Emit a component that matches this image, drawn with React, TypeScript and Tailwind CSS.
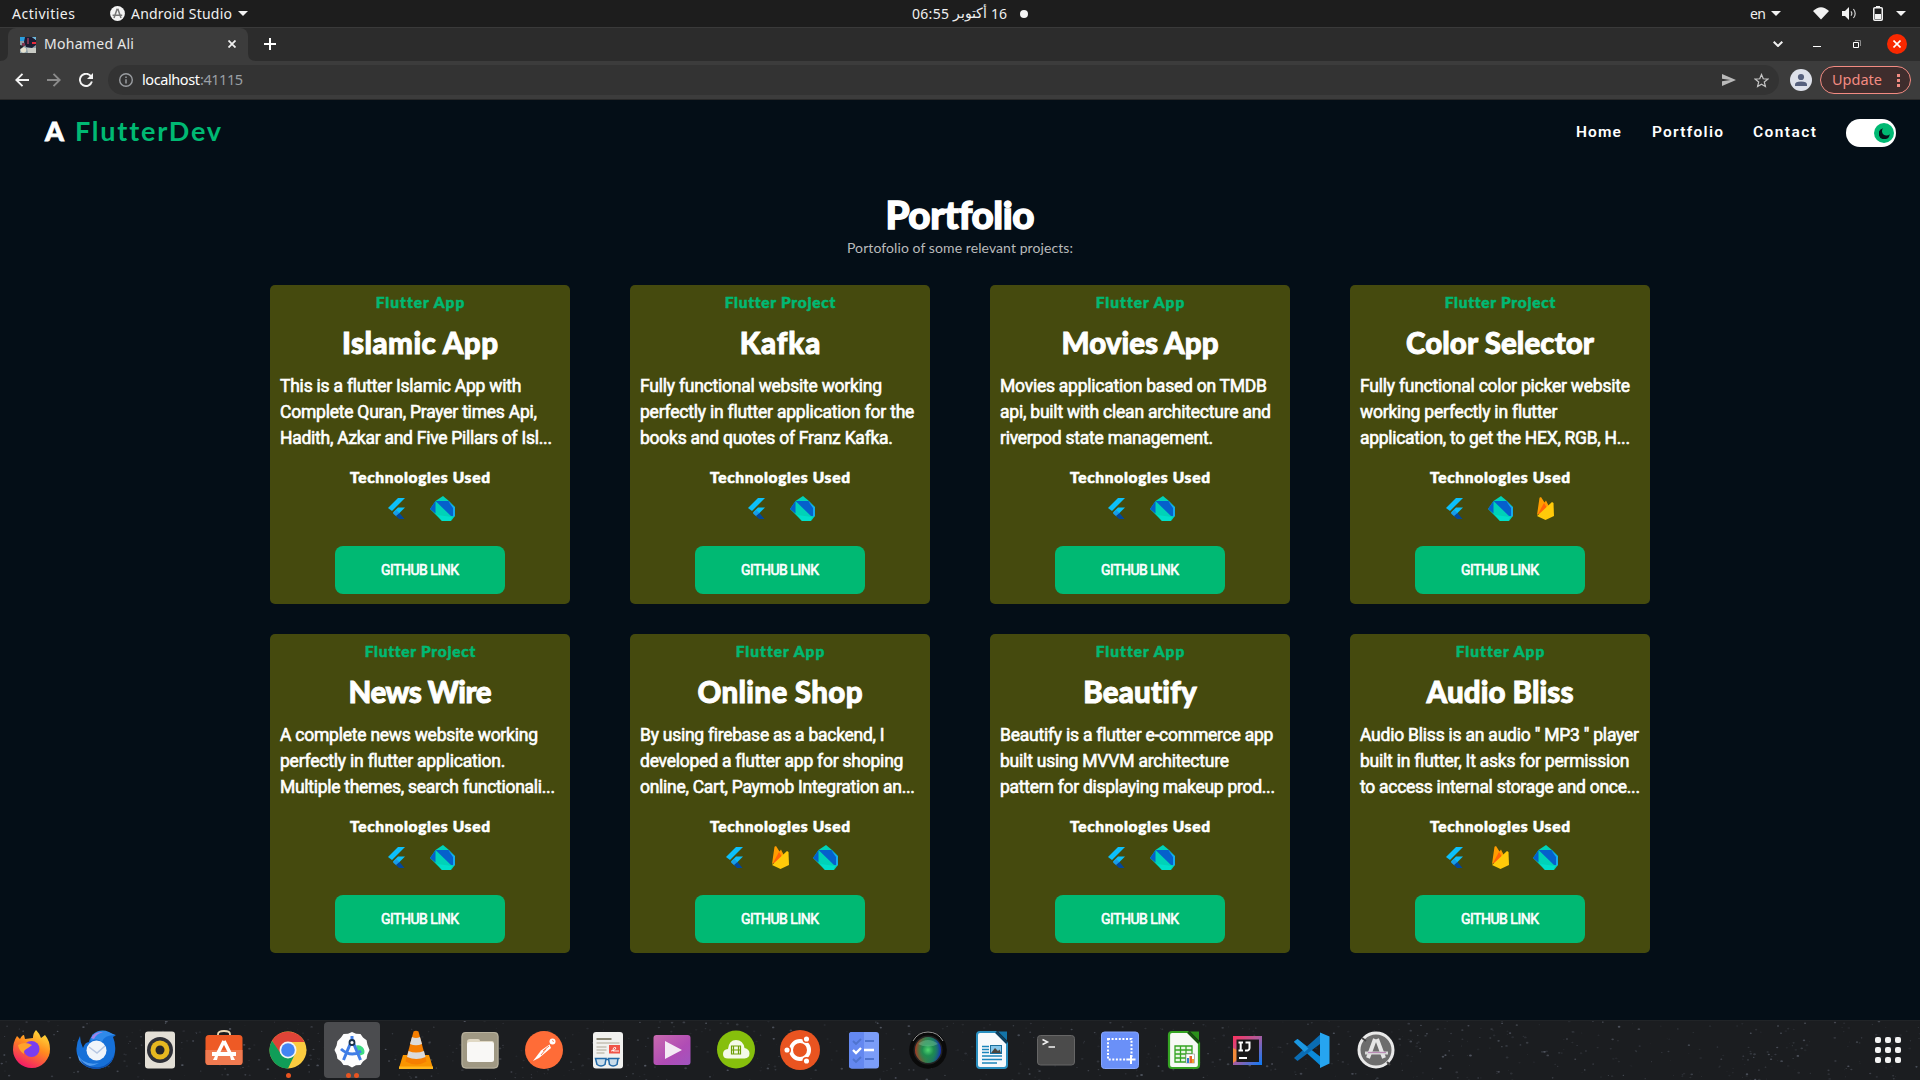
import React, { useLayoutEffect, useRef } from "react";

/* Single line of text whose tracking is adjusted so that it spans `w` pixels. */
function Fit({ w, className = "", children }: { w: number; className?: string; children: string }) {
  const ref = useRef<HTMLSpanElement>(null);
  useLayoutEffect(() => {
    const el = ref.current;
    if (!el) return;
    const s = (w - el.getBoundingClientRect().width) / Math.max(1, children.length - 1);
    el.style.letterSpacing = `${s}px`;
    el.style.marginRight = `${-s}px`;
    return () => {
      el.style.letterSpacing = "";
      el.style.marginRight = "";
    };
  }, [w, children]);
  return (
    <span ref={ref} className={`inline-block shrink-0 whitespace-nowrap ${className}`}>
      {children}
    </span>
  );
}

const UI = "font-['Noto_Sans',sans-serif]";
const GEO = "font-['Lato',sans-serif]";

function Caret({ className = "" }: { className?: string }) {
  return (
    <svg className={`h-[5px] w-[10px] shrink-0 ${className}`} viewBox="0 0 10 5">
      <path d="M0 0h10L5 5z" fill="#f2f2f2" />
    </svg>
  );
}

function TopBar() {
  return (
    <div className={`flex h-[27px] items-center bg-[#1d1d1d] text-[14px] text-[#f0f0f0] ${UI}`}>
      <div className="flex w-[912px] items-center">
        <Fit w={63} className="ml-3">Activities</Fit>
        <svg className="ml-[35px] h-[15px] w-[15px]" viewBox="0 0 15 15">
          <circle cx="7.5" cy="7.5" r="7.4" fill="#f4f4f4" />
          <path d="M7.2 2.8 4 12M7.8 2.8 11 12M2.6 9.2h9.6" stroke="#777" strokeWidth="1.5" fill="none" />
        </svg>
        <Fit w={101} className="ml-[6px]">Android Studio</Fit>
        <Caret className="ml-[6px]" />
      </div>
      <div className="flex items-center">
        <Fit w={37}>06:55</Fit>
        <span dir="rtl" className="ml-[6px] w-[32px] whitespace-nowrap text-[13.5px]">أكتوبر</span>
        <Fit w={16} className="ml-[4px]">16</Fit>
        <span className="ml-[13px] h-2 w-2 rounded-full bg-[#f4f4f4]" />
      </div>
      <div className="flex flex-1 items-center justify-end">
        <Fit w={16}>en</Fit>
        <Caret className="ml-[5px]" />
        <svg className="ml-[32px] h-[13px] w-4" viewBox="0 0 16 13">
          <path d="M0 4Q8-3.6 16 4L8 12.6z" fill="#f2f2f2" />
        </svg>
        <svg className="ml-[13px] h-[13px] w-[15px]" viewBox="0 0 15 13">
          <path d="M0 4h3l4-4v13l-4-4H0z" fill="#f2f2f2" />
          <path d="M9 4.3q1.6 2.2 0 4.4M11.4 2q3.6 4.5 0 9" stroke="#cfcfcf" strokeWidth="1.2" fill="none" />
        </svg>
        <svg className="ml-[16px] h-[15px] w-[10px]" viewBox="0 0 10 15">
          <path d="M3 0h4v2H3z" fill="#f2f2f2" />
          <rect x=".75" y="1.75" width="8.5" height="12.5" rx="1" fill="none" stroke="#f2f2f2" strokeWidth="1.5" />
          <path d="M2 8h6v5H2z" fill="#f2f2f2" />
        </svg>
        <Caret className="mr-[14px] ml-[13px]" />
      </div>
    </div>
  );
}

function TabStrip() {
  return (
    <div className={`flex h-[34px] items-center border-t border-[#3a3a3a] bg-[#2c2c2c] ${UI}`}>
      <svg className="h-2 w-2 self-end" viewBox="0 0 8 8">
        <path d="M8 0v8H0q8 0 8-8" fill="#3c3c3c" />
      </svg>
      <div className="flex h-full w-[240px] items-center rounded-t-[8px] bg-[#3c3c3c] text-[14px] text-[#e8e8e8]">
        <svg className="ml-3 h-4 w-4" viewBox="0 0 16 16">
          <path d="M0 0h16v16H0z" fill="#8fa0a8" />
          <path d="M0 0h5v4H0z" fill="#2a9fe0" />
          <path d="M5 0h7l4 3v5l-4 3-6-1-2-5z" fill="#1b1d33" />
          <path d="M7 1h2v6H7zM2 6h3v3H2z" fill="#7e3550" />
          <path d="M12 5h4v2h-4z" fill="#e62b3b" />
          <path d="M12 0h4v3z" fill="#6cb8dd" />
          <circle cx="3.5" cy="13" r="2.8" fill="#e7e3d0" />
          <path d="M7 11h9v5H8z" fill="#c9cbc5" />
          <path d="M0 8l4 1-2 2-2 1z" fill="#23262c" />
        </svg>
        <Fit w={90} className="mb-[2px] ml-[8px]">Mohamed Ali</Fit>
        <svg className="mr-[12px] mb-px ml-auto h-2 w-2" viewBox="0 0 8 8">
          <path d="M.5.5l7 7M7.5.5l-7 7" stroke="#f0f0f0" strokeWidth="1.800" />
        </svg>
      </div>
      <svg className="h-2 w-2 self-end" viewBox="0 0 8 8">
        <path d="M0 0v8h8q-8 0-8-8" fill="#3c3c3c" />
      </svg>
      <svg className="mb-px ml-2 h-3 w-3" viewBox="0 0 12 12">
        <path d="M6 0v12M0 6h12" stroke="#fff" strokeWidth="2" />
      </svg>
      <svg className="mb-px ml-auto h-[6px] w-[10px]" viewBox="0 0 10 6">
        <path d="M.7.7 5 5 9.3.7" stroke="#f0f0f0" strokeWidth="2" fill="none" />
      </svg>
      <span className="mt-[3px] ml-[30px] h-px w-2 bg-white" />
      <svg className="mb-px ml-[32px] h-2 w-2" viewBox="0 0 8 8">
        <path d="M2 .5h5.500V6" stroke="#8a8a8a" fill="none" />
        <path d="M.5 2.500h5v5h-5z" stroke="#fff" fill="none" />
      </svg>
      <span className="mr-[13px] mb-px ml-[26px] flex h-5 w-5 items-center justify-center rounded-full bg-[#f92800]">
        <svg className="h-2 w-2" viewBox="0 0 8 8">
          <path d="M.5.5l7 7M7.5.5l-7 7" stroke="#fff" strokeWidth="1.600" />
        </svg>
      </span>
    </div>
  );
}

function Toolbar() {
  return (
    <div className={`flex h-[39px] items-center border-b border-[#2a2a2a] bg-[#3c3c3c] ${UI}`}>
      <svg className="ml-[15px] h-[14px] w-[14px]" viewBox="0 0 14 14">
        <path d="M14 7H1.5M7.5.8 1.300 7l6.200 6.200" stroke="#f4f4f4" strokeWidth="1.900" fill="none" />
      </svg>
      <svg className="ml-[18px] h-[14px] w-[14px]" viewBox="0 0 14 14">
        <path d="M0 7h12.500M6.500.8 12.700 7l-6.200 6.200" stroke="#8b8b8b" strokeWidth="1.900" fill="none" />
      </svg>
      <svg className="ml-[18px] h-[14px] w-[14px]" viewBox="0 0 14 14">
        <path d="M12.300 3.800A6.100 6.100 0 1 0 12.900 8.500" stroke="#f4f4f4" strokeWidth="1.900" fill="none" />
        <path d="M14 0v6H8z" fill="#f4f4f4" />
      </svg>
      <div className="ml-[15px] flex h-[30px] w-[1671px] items-center rounded-full bg-[#333333] text-[14.5px]">
        <svg className="ml-[11px] h-[14px] w-[14px]" viewBox="0 0 14 14">
          <circle cx="7" cy="7" r="6.300" stroke="#9a9da1" strokeWidth="1.400" fill="none" />
          <path d="M6.250 6.200h1.500v4.300h-1.500zM6.250 3.500h1.500V5h-1.500z" fill="#9a9da1" />
        </svg>
        <Fit w={58} className="ml-[9px] text-white">localhost</Fit>
        <Fit w={43} className="text-[#9aa0a6]">:41115</Fit>
        <svg className="ml-auto h-3 w-[14px]" viewBox="0 0 14 12">
          <path d="M0 0l14 6-14 6V7.300L8.500 6 0 4.700z" fill="#b9b9b9" />
        </svg>
        <svg className="mr-[10px] ml-[18px] h-[15px] w-[15px]" viewBox="0 0 24 24">
          <path d="M12 2.500l2.800 6.700 7.200.6-5.500 4.700 1.700 7L12 17.800 5.800 21.500l1.700-7L2 9.800l7.200-.6z" stroke="#c4c4c4" strokeWidth="2" fill="none" />
        </svg>
      </div>
      <svg className="ml-[11px] h-[22px] w-[22px]" viewBox="0 0 22 22">
        <circle cx="11" cy="11" r="11" fill="#dee1ea" />
        <circle cx="11" cy="8" r="3.100" fill="#56607d" />
        <path d="M5 17v-1.500q0-3 6-3t6 3V17z" fill="#56607d" />
      </svg>
      <div className="ml-2 flex h-7 w-[91px] items-center rounded-full border border-[#f28b82] bg-[#3f2d2d] text-[14.5px] text-[#f28b82]">
        <Fit w={50} className="ml-[11px]">Update</Fit>
        <svg className="ml-[15px] h-[13px] w-[3px]" viewBox="0 0 3 13">
          <path d="M0 0h3v3H0zM0 5h3v3H0zM0 10h3v3H0z" fill="#f28b82" />
        </svg>
      </div>
    </div>
  );
}

function Header() {
  return (
    <header className="flex h-[66px] items-center">
      <Fit w={18} className={`mb-[4px] ml-[45px] text-[27px] font-black text-white [-webkit-text-stroke:0.8px_white] ${GEO}`}>A</Fit>
      <Fit w={145} className={`mb-[4px] ml-[11px] text-[27px] font-bold text-[#00b973] ${GEO}`}>FlutterDev</Fit>
      <nav className="ml-auto flex items-center font-['Roboto',sans-serif] text-[15.5px] font-semibold text-white">
        <Fit w={45}>Home</Fit>
        <Fit w={71} className="ml-[31px]">Portfolio</Fit>
        <Fit w={63} className="ml-[30px]">Contact</Fit>
      </nav>
      <div className="mr-6 ml-[30px] flex h-7 w-[50px] items-center justify-end rounded-full bg-white pr-[2px]">
        <span className="flex h-5 w-5 items-center justify-center rounded-full bg-[#00b973]">
          <svg className="h-[11px] w-[11px]" viewBox="0 0 12 12">
            <path d="M4.500.3a4.800 4.800 0 0 0 7.200 6.400A6 6 0 1 1 4.500.3z" fill="#06111a" />
          </svg>
        </span>
      </div>
    </header>
  );
}

function FlutterIcon() {
  return (
    <svg className="-ml-[2px] h-[21px] w-[17px]" viewBox="0 0 17 21">
      <path d="M10 0h7L4 13 0 10z" fill="#0cc0fb" />
      <path d="M10 9.500h7L11 15.500 8.500 18 5 14.500z" fill="#0cc0fb" />
      <path d="M5 15.500l3.500-3.300 3.300 3.300L8.500 18.500z" fill="#1a9be8" />
      <path d="M8 18l3.500-3 5 6H11z" fill="#02479c" />
    </svg>
  );
}

function DartIcon() {
  return (
    <svg className="h-[25px] w-[25px]" viewBox="0 0 25 25">
      <path d="M0 13 5.500 5 13 0l6 5 6 6v9l-4 5H12l-7-7z" fill="#00d2b8" />
      <path d="M0 13 5.500 5v12.500z" fill="#0560cc" />
      <path d="M5.500 5H19l5 7v8h-3z" fill="#0560cc" />
      <path d="M18 5l6.800 6.500V20L23 21V12z" fill="#1aa4f4" />
      <path d="M7 19l15 2-1.500 4H12z" fill="#00dfca" />
    </svg>
  );
}

function FirebaseIcon() {
  return (
    <svg className="h-[23px] w-[17px]" viewBox="0 0 17 23">
      <path d="M0 18 2.500.8 4 0l3.500 5.500L9 3.500l3 6z" fill="#ff9c00" />
      <path d="M1 17 7 6l3 5-6 6z" fill="#ff6408" />
      <path d="M0 19 15 5l1.500 1L17 19l-8.500 4z" fill="#ffca0a" />
    </svg>
  );
}

type Tech = "f" | "d" | "b";
type Project = { tag: string; title: string; tw: number; lines: [string, number][]; tech: Tech[] };

const projects: Project[] = [
  { tag: "Flutter App", title: "Islamic App", tw: 156, lines: [["This is a flutter Islamic App with", 241], ["Complete Quran, Prayer times Api,", 257], ["Hadith, Azkar and Five Pillars of Isl...", 272]], tech: ["f", "d"] },
  { tag: "Flutter Project", title: "Kafka", tw: 81, lines: [["Fully functional website working", 242], ["perfectly in flutter application for the", 274], ["books and quotes of Franz Kafka.", 253]], tech: ["f", "d"] },
  { tag: "Flutter App", title: "Movies App", tw: 157, lines: [["Movies application based on TMDB", 267], ["api, built with clean architecture and", 271], ["riverpod state management.", 213]], tech: ["f", "d"] },
  { tag: "Flutter Project", title: "Color Selector", tw: 188, lines: [["Fully functional color picker website", 270], ["working perfectly in flutter", 197], ["application, to get the HEX, RGB, H...", 270]], tech: ["f", "d", "b"] },
  { tag: "Flutter Project", title: "News Wire", tw: 143, lines: [["A complete news website working", 258], ["perfectly in flutter application.", 225], ["Multiple themes, search functionali...", 275]], tech: ["f", "d"] },
  { tag: "Flutter App", title: "Online Shop", tw: 165, lines: [["By using firebase as a backend, I", 244], ["developed a flutter app for shoping", 263], ["online, Cart, Paymob Integration an...", 275]], tech: ["f", "b", "d"] },
  { tag: "Flutter App", title: "Beautify", tw: 114, lines: [["Beautify is a flutter e-commerce app", 273], ["built using MVVM architecture", 229], ["pattern for displaying makeup prod...", 275]], tech: ["f", "d"] },
  { tag: "Flutter App", title: "Audio Bliss", tw: 147, lines: [["Audio Bliss is an audio \" MP3 \" player", 279], ["built in flutter, It asks for permission", 269], ["to access internal storage and once...", 280]], tech: ["f", "b", "d"] },
];

function Card({ p }: { p: Project }) {
  return (
    <article className="flex h-[319px] w-[300px] flex-col items-center rounded-[5px] bg-[#454a0e] text-white">
      <div className="mt-[7px] flex h-5 items-center">
        <Fit w={p.tag === "Flutter App" ? 88 : 110} className={`text-[15.5px] leading-5 font-black text-[#00b973] [-webkit-text-stroke:0.5px_#00b973] ${GEO}`}>{p.tag}</Fit>
      </div>
      <div className="mt-[11px] flex h-10 items-center">
        <Fit w={p.tw} className={`text-[29.5px] leading-10 font-black [-webkit-text-stroke:0.9px_white] ${GEO}`}>{p.title}</Fit>
      </div>
      <div className="mt-[10px] flex w-full flex-col items-start pl-[10px] font-['Roboto',sans-serif] text-[17.5px] leading-[26px] font-normal [-webkit-text-stroke:0.6px_white]">
        {p.lines.map(([t, w]) => (
          <Fit key={t} w={w}>{t}</Fit>
        ))}
      </div>
      <div className="mt-[16px] flex h-5 items-center">
        <Fit w={140} className={`text-[15.5px] leading-5 font-black [-webkit-text-stroke:0.6px_white] ${GEO}`}>Technologies Used</Fit>
      </div>
      <div className="mt-[9px] flex h-[25px] items-center">
        {p.tech.map((t) => (
          <span key={t} className="flex w-[45px] items-center justify-center">
            {t === "f" ? <FlutterIcon /> : t === "d" ? <DartIcon /> : <FirebaseIcon />}
          </span>
        ))}
      </div>
      <button className="mt-[25px] flex h-12 w-[170px] items-center justify-center rounded-[8px] bg-[#00b973] font-['Roboto',sans-serif] text-[14px] font-normal [-webkit-text-stroke:0.6px_white]">
        <Fit w={78}>GITHUB LINK</Fit>
      </button>
    </article>
  );
}

function Firefox() {
  return (
    <>
      <defs>
        <linearGradient id="ff" x1=".8" y1="0" x2=".3" y2="1"><stop offset="0" stopColor="#ffe43d" /><stop offset=".45" stopColor="#ff8a1e" /><stop offset="1" stopColor="#f2156b" /></linearGradient>
      </defs>
      <path d="M24 0q4 4 5 8l4-3q5 6 5 14a18 18 0 0 1-37 1q0-8 4-14l3 3q2-4 4-4l1 4 8-1q0-5 3-8z" fill="url(#ff)" />
      <circle cx="19.5" cy="19" r="8" fill="#7a3df0" />
      <path d="M6 15q7-4 14 0l-4 3q-5 2-4 6-5-3-6-9z" fill="#ffa22b" />
    </>
  );
}

function Thunderbird() {
  return (
    <>
      <path d="M4 6Q-1 15 1 24q4 14 19 15 17-1 19-17 1-8-2-15l3-2-4-1Q26-1 18 4q-4 3-5 8-4 0-6 6-3-6-3-12z" fill="#1670d8" />
      <path d="M16 5q8-7 17-3l6 3q-11 0-13 7-5-5-11-1z" fill="#2f8aea" />
      <path d="M15 8q4-7 12-6-7 2-9 7z" fill="#a184e8" />
      <circle cx="20.500" cy="20.500" r="10" fill="#f0f4fa" />
      <path d="M13 17l8 6 8-7" stroke="#b7c7e2" strokeWidth="1.500" fill="none" />
      <path d="M2 25q6 11 21 8-12 7-20-3z" fill="#4f9bf0" />
      <path d="M4 29q8 10 20 8 10-2 14-12-3 13-18 14Q8 38 4 29z" fill="#0e4fae" />
    </>
  );
}

const dock: React.ReactNode[] = [
  <Firefox />,
  <Thunderbird />,
  <>
    <rect x="5" y="1.500" width="30" height="37" rx="3" fill="#e3dfd6" />
    <circle cx="20" cy="20" r="13" fill="#2e3038" /><circle cx="20" cy="20" r="9.500" fill="#e6b820" /><circle cx="20" cy="20" r="4.500" fill="#26262a" />
  </>,
  <>
    <path d="M14 7V4q0-3 6-3t6 3v3" stroke="#ecd9b5" strokeWidth="1.800" fill="none" />
    <rect x="1.500" y="5" width="37" height="30" rx="3.500" fill="#ee5a25" /><path d="M1.500 20h37v12q0 3-3 3h-31q-3 0-3-3z" fill="#f07a50" />
    <path d="M20 11l-6 12M20 11l6 12" stroke="#fff" strokeWidth="3.500" fill="none" /><path d="M8 22h24v4H8zM11 26h3l-1 4h-4zM26 26h3l2 4h-4z" fill="#fff" />
  </>,
  <>
    <circle cx="20" cy="20" r="18.500" fill="#fbcb3f" />
    <path d="M4 10.700A18.500 18.500 0 0 1 36.500 12H20L12 24z" fill="#df4437" />
    <path d="M4 10.700A18.500 18.500 0 0 0 20 38.500l7-14.500-14 0z" fill="#109d58" />
    <circle cx="20" cy="20" r="8.500" fill="#f4f4f4" /><circle cx="20" cy="20" r="6.800" fill="#4384f3" />
  </>,
  <>
    <path d="M20 2l4 1.700 4.500.3 2.500 3.500 3.600 2.700.8 4.300L37.500 20l-2.100 4.500-.8 4.300-3.600 2.700L28.500 35l-4.500.3-4 2.200-4-2.200-4.500-.3L9 31.500l-3.600-2.700-.8-4.300L2.500 20l2.100-4.500.8-4.300L9 7.500 11.500 4l4.500-.3z" fill="#fdfdfd" />
    <path d="M24 15.500a6.500 6.500 0 0 1 8 8.500l-5 2z" fill="#3ddc84" />
    <path d="M19 12l-7.500 18M21 12l7.500 18M9 19q10 9 20 2" stroke="#3f7de6" strokeWidth="3" fill="none" />
    <path d="M20 6v5" stroke="#3f7de6" strokeWidth="3" /><circle cx="20" cy="12.500" r="2.500" fill="#fff" stroke="#173049" strokeWidth="1.800" />
  </>,
  <>
    <path d="M7 25h26l4 13H3z" fill="#f99400" /><path d="M3 36.500h34V39H3z" fill="#ffb61c" />
    <path d="M17.500 1.500q2.500-1.500 5 0l8 30q-10 6-21 0z" fill="#f57e00" />
    <path d="M16 7q4 2 8 0l2 7q-6 2.500-12 0zM12.500 21q7.500 3 15.500 0l1.500 6q-9 4-18.500 0z" fill="#dbdbdb" />
  </>,
  <>
    <rect x="1.500" y="2" width="37" height="36.500" rx="4" fill="#9f9883" /><rect x="2" y="2.500" width="36" height="35.500" rx="4" fill="none" stroke="#b7b19e" />
    <path d="M7 12q0-3 3-3h8q2 0 2 2h12q2 0 2 3v14q0 3-3 3H10q-3 0-3-3z" fill="#e0d8c4" /><rect x="7" y="12" width="27" height="20" rx="2.500" fill="#f9f8f6" />
  </>,
  <>
    <circle cx="20" cy="20" r="19" fill="#ff6c37" /><circle cx="28.500" cy="11.500" r="3" fill="#fff" />
    <path d="M25.500 14.500l-8.500 6-8 10.500 6-3 12-10z" fill="#fff" /><path d="M25 16l-6 5M22 19l-5 6" stroke="#ff6c37" strokeWidth=".9" /><path d="M28 10.500l2 1" stroke="#ff6c37" strokeWidth=".8" />
  </>,
  <>
    <rect x="5" y="2" width="30" height="36.500" rx="3" fill="#f1f1ef" />
    <path d="M8.500 9h15" stroke="#8c8977" strokeWidth="2" /><path d="M8.500 13h23M8.500 17h10M8.500 20h10M8.500 23h8" stroke="#c4c0b4" strokeWidth="1.600" />
    <rect x="21" y="15" width="11" height="8.500" fill="#f05448" /><path d="M23 21q4 0 5-3-3-2-3 3h6" stroke="#fff" fill="none" strokeWidth=".9" />
    <path d="M7.500 28.500h10.500l-1 6q-4 3-8 0zM20.500 28.500h9.500l-1 6q-4 3-7.500 0zM30 29l1.500-1" fill="#c9dcea" stroke="#236aa8" strokeWidth="1.500" /><path d="M18 29.500h3" stroke="#236aa8" strokeWidth="1.500" />
  </>,
  <>
    <defs><linearGradient id="vid" x1="0" y1="0" x2="1" y2="1"><stop offset="0" stopColor="#c96aaf" /><stop offset=".6" stopColor="#b04cb5" /><stop offset="1" stopColor="#a054c0" /></linearGradient></defs>
    <rect x="1.500" y="5" width="37" height="30" rx="3" fill="url(#vid)" /><path d="M13 11v18l17-9z" fill="#f4eaf4" />
  </>,
  <>
    <circle cx="20" cy="19.500" r="19" fill="#86bf0c" /><path d="M12 28.500q-5 0-5-4.500t5-5q1-9 8-9t8.500 8q5 1 5 5.500t-5 5z" fill="#f5fae9" />
    <path d="M15.500 16h9v8h-9zM15.500 20h9M17.500 16v8M22.500 16v8" stroke="#6fa008" strokeWidth="1.200" fill="none" />
  </>,
  <>
    <circle cx="20" cy="20" r="20" fill="#e95420" /><circle cx="20" cy="20" r="9" fill="none" stroke="#fff" strokeWidth="4" />
    <g fill="#fff" stroke="#e95420" strokeWidth="1.500"><circle cx="7" cy="20" r="3.300" /><circle cx="26.500" cy="9" r="3.300" /><circle cx="26.500" cy="31" r="3.300" /></g>
  </>,
  <>
    <rect x="5" y="2" width="30" height="36.500" rx="3" fill="#7b9df8" /><path d="M5 5q0-3 3-3h12v36.500H8q-3 0-3-3z" fill="#6488f0" />
    <path d="M9 11l3 3 5-5M9 29l3 3 5-5M21 11h9M21 29h9" stroke="#4f74cf" strokeWidth="1.900" fill="none" /><path d="M9 20l3 3 5-5M20 20h10" stroke="#fff" strokeWidth="2.300" fill="none" />
  </>,
  <>
    <defs>
      <radialGradient id="ln"><stop offset="0" stopColor="#4fd870" /><stop offset=".45" stopColor="#1d8d50" stopOpacity=".95" /><stop offset="1" stopColor="#1d8d50" stopOpacity=".1" /></radialGradient>
      <linearGradient id="lb"><stop offset="0" stopColor="#c02c1c" /><stop offset=".4" stopColor="#3f7a4a" /><stop offset=".7" stopColor="#1c6f6a" /><stop offset="1" stopColor="#1420c8" /></linearGradient>
    </defs>
    <circle cx="20" cy="20" r="18.800" fill="#0a0a0a" /><path d="M5 11q5-9 15-9t15 9" stroke="#999" strokeWidth="1" fill="none" /><circle cx="20" cy="20" r="14.500" fill="#222" />
    <circle cx="20" cy="20" r="13" fill="url(#lb)" /><circle cx="20" cy="20" r="13" fill="url(#ln)" /><path d="M10 14q10-8 20 0-10 5-20 0z" fill="#8fd8b0" opacity=".35" />
  </>,
  <>
    <path d="M8 2h16l11 11v22q0 3-3 3H8q-3 0-3-3V5q0-3 3-3z" fill="#f7f9fb" stroke="#2a8fc0" strokeWidth="2" /><path d="M26 1.500h9v9z" fill="#1374a8" /><path d="M24 2l11 11" stroke="#0d3f5e" strokeWidth="2.500" />
    <path d="M10 16.500h7M10 19.500h7M10 22.500h7M10 26h20M10 29.500h20M10 33h15" stroke="#1b85bb" strokeWidth="1.700" /><rect x="18.500" y="15.500" width="11" height="8" fill="#86c6ea" stroke="#1b6f9d" /><path d="M19 23l4-5 3 3 1.500-1.500L29 23z" fill="#4a443c" />
  </>,
  <>
    <rect x="1.500" y="5.500" width="37" height="29.500" rx="3" fill="#4b4b4b" stroke="#666" /><path d="M6.500 9.500l5 2.500-5 2.500" stroke="#f2f2f2" strokeWidth="1.500" fill="none" /><path d="M12.500 17h6.500" stroke="#f2f2f2" strokeWidth="1.500" />
  </>,
  <>
    <rect x="1.500" y="2" width="37" height="36.500" rx="3" fill="#6a90f8" stroke="#86a5fb" /><rect x="8" y="9" width="23.500" height="20.500" fill="none" stroke="#fff" strokeWidth="2" strokeDasharray="2 1.600" /><path d="M27 28h10v3H27z" fill="#6a90f8" /><path d="M31 25v9M26.500 29.500h9" stroke="#fff" strokeWidth="2" />
  </>,
  <>
    <path d="M8 2h16l11 11v22q0 3-3 3H8q-3 0-3-3V5q0-3 3-3z" fill="#f7f9f6" stroke="#35a423" strokeWidth="2.200" /><path d="M26 1.500h9v9z" fill="#2a901a" /><path d="M24 2l11 11" stroke="#17520f" strokeWidth="2.500" />
    <path d="M11 16h17v16H11zM11 20h17M11 24h17M11 28h17M16.500 16v16M22 16v16" stroke="#35a423" strokeWidth="1.300" fill="#e8f5e4" />
    <rect x="22" y="24" width="8.500" height="9" fill="#fff" stroke="#888" strokeWidth=".6" /><path d="M23 28h2v5h-2z" fill="#2c7fd0" /><path d="M25.500 26H28v7h-2.500z" fill="#e8642a" /><path d="M28 29h2v4h-2z" fill="#f0a030" />
  </>,
  <>
    <defs><linearGradient id="ij" x1="0" y1="0" x2="1" y2="1"><stop offset="0" stopColor="#fe315d" /><stop offset=".45" stopColor="#b25a9a" /><stop offset="1" stopColor="#087cfa" /></linearGradient></defs>
    <path d="M5 6h29v29H5z" fill="url(#ij)" /><path d="M5 18l4 2v10l-4 3z" fill="#f28a3a" /><path d="M8.500 9.500H31V32H8.500z" fill="#1a1a1a" /><path d="M11 28h8" stroke="#fff" strokeWidth="2" />
    <path d="M10.500 12.500h4.500M12.700 12.500v8M10.500 20.500h4.500M17.500 12.500h4V18q0 3-4.500 2.400" stroke="#fff" strokeWidth="2" fill="none" />
  </>,
  <>
    <path d="M2 11.500 5.500 9 30 28v9z" fill="#0b8ad8" /><path d="M2 28l3.500 3L30 12.500V3z" fill="#0a6cb3" /><path d="M2 12l3.500-3 11 9.500-4 3.500z" fill="#1c97e0" /><path d="M28 2.500l9.500 4v27l-9.500 4.500z" fill="#26a5f0" />
  </>,
  <>
    <circle cx="20" cy="20" r="17" fill="#6d6d6d" stroke="#e9e9e9" strokeWidth="3" /><path d="M6 8l4 3M31 32l3 3" stroke="#444" strokeWidth="2" />
    <path d="M19 9l-7 19M21 9l7 19" stroke="#e6e6e6" strokeWidth="4" fill="none" /><path d="M9 23h23" stroke="#d9d9d9" strokeWidth="3" /><path d="M12 22.500h18" stroke="#b98bb5" strokeWidth="1.200" />
  </>,
];

/* Deterministic star positions for the dock wallpaper. */
const stars = Array.from({ length: 900 }, (_, i) => {
  const r = (k: number) => {
    const v = Math.sin(i * 12.9898 + k * 78.233) * 43758.5453;
    return v - Math.floor(v);
  };
  return { x: r(1) * 1920, y: r(2) * 60, s: 0.4 + r(3) * 0.7, o: 0.08 + r(4) * r(4) * 0.36 };
});

function Dock() {
  return (
    <footer className="relative h-[60px] overflow-hidden border-t border-[#212427] bg-[#1b1d20]">
      <svg className="absolute inset-0 h-[60px] w-[1920px]" viewBox="0 0 1920 60">
        {stars.map((s, i) => (
          <ellipse key={i} cx={s.x} cy={s.y} rx={s.s * 1.3} ry={s.s * 0.9} fill="#98a0b4" opacity={s.o} />
        ))}
      </svg>
      <div className="relative flex h-[58px] items-center">
        {dock.map((icon, i) => (
          <div key={i} className="flex w-16 justify-center">
            <div className={`relative flex h-14 w-14 items-center justify-center rounded-[4px] ${i === 5 ? "bg-[#4b4c4f]" : ""}`}>
              <svg className="h-10 w-10" viewBox="0 0 40 40">{icon}</svg>
              {(i === 4 || i === 5) && (
                <div className="absolute bottom-0 flex gap-[3px]">
                  <span className="h-[5px] w-[5px] rounded-full bg-[#e95420]" />
                  {i === 5 && <span className="h-[5px] w-[5px] rounded-full bg-[#e95420]" />}
                </div>
              )}
            </div>
          </div>
        ))}
        <div className="mr-[19px] ml-auto grid grid-cols-3 gap-1">
          {Array.from({ length: 9 }, (_, i) => (
            <span key={i} className="h-[6px] w-[6px] rounded-[2px] bg-[#f2f2f2]" />
          ))}
        </div>
      </div>
    </footer>
  );
}

export default function App() {
  return (
    <div className="flex h-[1080px] w-[1920px] flex-col overflow-hidden bg-[#040e17]">
      <TopBar />
      <TabStrip />
      <Toolbar />
      <Header />
      <main className="flex flex-1 flex-col items-center">
        <Fit w={148} className={`mt-[23px] text-[38.5px] leading-[50px] font-black text-white [-webkit-text-stroke:1.3px_white] ${GEO}`}>Portfolio</Fit>
        <Fit w={226} className={`-mt-[1px] text-[14px] leading-5 text-[#b9babb] ${GEO}`}>Portofolio of some relevant projects:</Fit>
        <div className="mt-[27px] grid grid-cols-4 gap-x-[60px] gap-y-[30px]">
          {projects.map((p) => (
            <Card key={p.title} p={p} />
          ))}
        </div>
      </main>
      <Dock />
    </div>
  );
}
